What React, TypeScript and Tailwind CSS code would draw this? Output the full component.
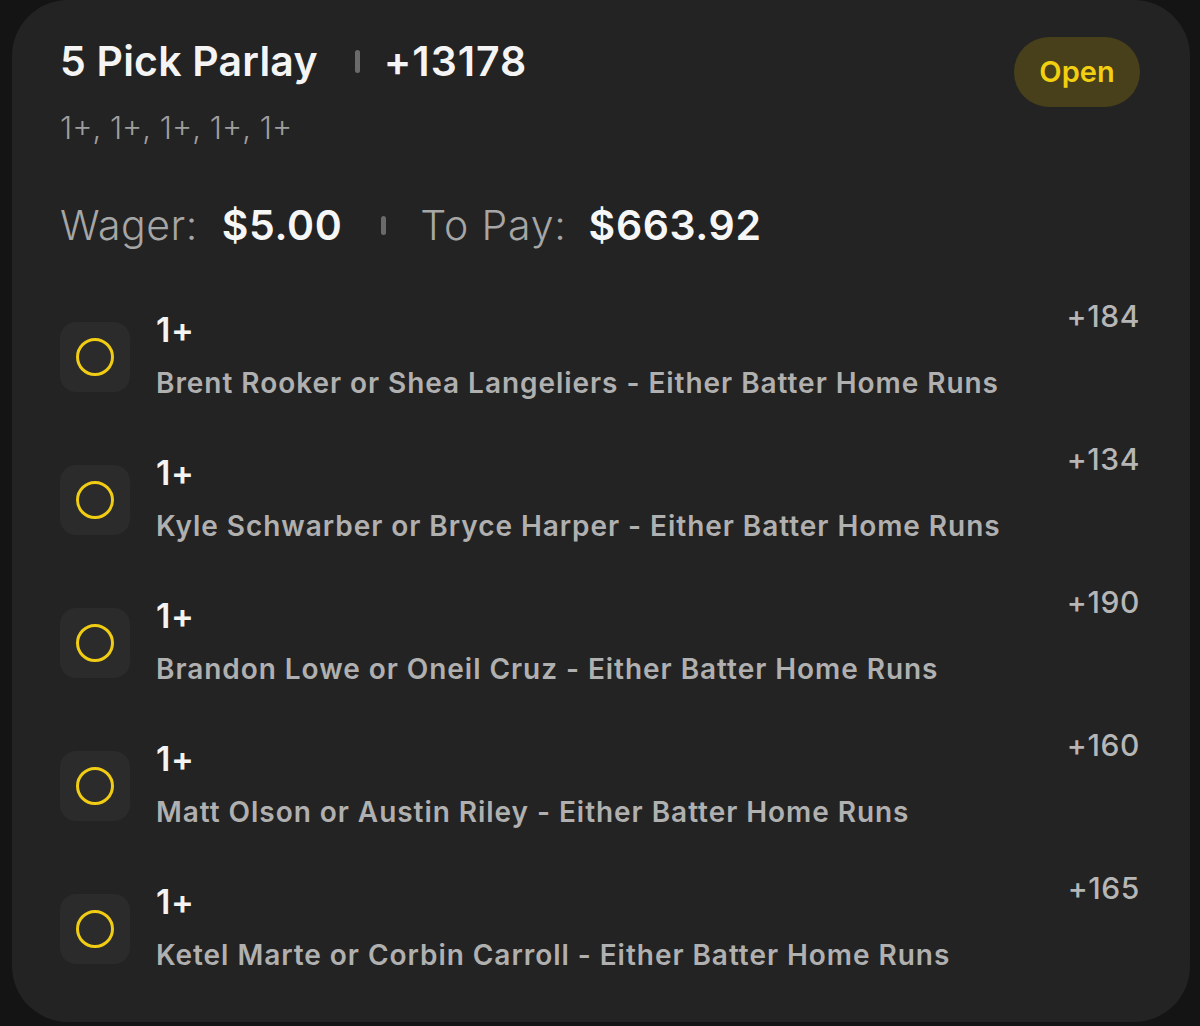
const legs = [
  { odds: "+184", desc: "Brent Rooker or Shea Langeliers - Either Batter Home Runs" },
  { odds: "+134", desc: "Kyle Schwarber or Bryce Harper - Either Batter Home Runs" },
  { odds: "+190", desc: "Brandon Lowe or Oneil Cruz - Either Batter Home Runs" },
  { odds: "+160", desc: "Matt Olson or Austin Riley - Either Batter Home Runs" },
  { odds: "+165", desc: "Ketel Marte or Corbin Carroll - Either Batter Home Runs" },
];

function LegRow({ odds, desc }: { odds: string; desc: string }) {
  return (
    <div className="flex h-[143px] items-start">
      <div className="mt-[24px] flex h-[70px] w-[70px] shrink-0 items-center justify-center rounded-[16px] bg-[#2b2b2b]">
        <div className="h-[38px] w-[38px] rounded-full border-[3px] border-[#f0cc14]" />
      </div>
      <div className="ml-[26px] mt-[12px] flex-1">
        <div className="text-[34px] font-semibold leading-[40px] tracking-[0.5px] text-[#f4f4f4]">1+</div>
        <div className="mt-[16px] text-[28px] font-semibold leading-[34px] tracking-[0.95px] text-[#b0b0b0]">{desc}</div>
      </div>
      <div className="text-[30px] font-medium leading-[36px] tracking-[0.6px] text-[#b6b6b6]">{odds}</div>
    </div>
  );
}

export default function App() {
  return (
    <div className="h-[1026px] w-[1200px] bg-[#141414] pl-[12px] font-['Inter',sans-serif]">
      <div className="h-[1022px] w-[1178px] rounded-[56px] bg-[#232323] pl-[48px] pr-[50px] pt-[37px]">
        <div className="flex items-start justify-between">
          <div>
            <div className="flex items-center">
              <span className="text-[41px] font-semibold leading-[48px] tracking-[0.2px] text-[#f4f4f4]">5 Pick Parlay</span>
              <span className="ml-[37px] mr-[24px] h-[23px] w-[5px] rounded-full bg-[#6a6a6a]" />
              <span className="text-[41px] font-semibold leading-[48px] tracking-[1px] text-[#f4f4f4]">+13178</span>
            </div>
            <div className="mt-[25px] text-[31px] font-light leading-[36px] text-[#9e9e9e]">1+, 1+, 1+, 1+, 1+</div>
          </div>
          <div className="flex h-[70px] w-[126px] items-center justify-center rounded-full bg-[#48401a] text-[29px] font-semibold text-[#f2cf10]">
            Open
          </div>
        </div>
        <div className="mt-[55px] flex items-center text-[41px] leading-[48px]">
          <span className="font-light tracking-[0.5px] text-[#a6a6a6]">Wager:</span>
          <span className="ml-[24px] font-semibold tracking-[0.6px] text-[#f6f6f6]">$5.00</span>
          <span className="ml-[39px] mr-[34px] h-[19px] w-[5px] rounded-full bg-[#6a6a6a]" />
          <span className="font-light tracking-[0.8px] text-[#a6a6a6]">To Pay:</span>
          <span className="ml-[22px] font-semibold tracking-[0.6px] text-[#f6f6f6]">$663.92</span>
        </div>
        <div className="mt-[49px]">
          {legs.map((l) => (
            <LegRow key={l.odds} odds={l.odds} desc={l.desc} />
          ))}
        </div>
      </div>
    </div>
  );
}
